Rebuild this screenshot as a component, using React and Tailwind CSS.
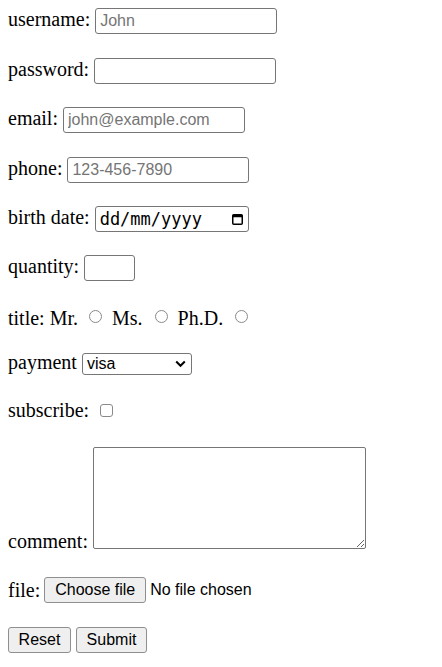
export default function App() {
  const serif = "font-['Liberation_Serif','Times_New_Roman',serif] text-[20px] text-black";
  const sans = "font-['Liberation_Sans',Arial,sans-serif] text-[16px] text-black";
  const field =
    "block shrink-0 h-[26px] border border-[#767676] rounded-[3px] px-[4px] bg-white outline-none placeholder:text-[#757575] font-['Liberation_Sans',Arial,sans-serif] text-[16px] text-black";
  const radio =
    "block shrink-0 w-[13px] h-[13px] rounded-full border border-[#8a8a8a] bg-white mt-[3px]";
  const btn =
    "shrink-0 h-[26px] border border-[#8f8f8f] rounded-[3px] bg-[#efefef] px-[8px] font-['Liberation_Sans',Arial,sans-serif] text-[16px] text-black leading-none";
  const label = "leading-[23px] shrink-0";

  return (
    <form className={`${serif} pl-[8px] pt-[8px] bg-white`}>
      <div className="flex items-start gap-[5px] h-[26px]">
        <span className={label}>username:</span>
        <input className={`${field} w-[182px]`} placeholder="John" />
      </div>
      <div className="flex items-start gap-[5px] h-[26px] mt-[24px]">
        <span className={label}>password:</span>
        <input type="password" className={`${field} w-[182px]`} />
      </div>
      <div className="flex items-start gap-[5px] h-[26px] mt-[23px]">
        <span className={label}>email:</span>
        <input className={`${field} w-[182px]`} placeholder="john@example.com" />
      </div>
      <div className="flex items-start gap-[5px] h-[26px] mt-[24px]">
        <span className={label}>phone:</span>
        <input className={`${field} w-[182px]`} placeholder="123-456-7890" />
      </div>
      <div className="flex items-start gap-[5px] h-[26px] mt-[23px]">
        <span className={label}>birth date:</span>
        <div className="shrink-0 h-[26px] w-[154px] border border-[#767676] rounded-[3px] pl-[4px] pr-[5px] flex items-center justify-between bg-white">
          <span className="font-['DejaVu_Sans_Mono','Liberation_Mono',monospace] text-[17px] text-black leading-none">
            dd/mm/yyyy
          </span>
          <svg width="11" height="12" viewBox="0 0 11 12">
            <rect x="0.75" y="1.75" width="9.5" height="9.5" rx="1" fill="none" stroke="black" strokeWidth="1.5" />
            <rect x="0.75" y="1.75" width="9.5" height="2.5" fill="black" />
          </svg>
        </div>
      </div>
      <div className="flex items-start gap-[5px] h-[26px] mt-[23px]">
        <span className={label}>quantity:</span>
        <input type="text" className={`${field} w-[51px]`} />
      </div>
      <div className="flex items-start h-[26px] mt-[26px]" role="radiogroup">
        <span className={label}>title: Mr.</span>
        <span role="radio" aria-checked="false" className={`${radio} ml-[11px]`} />
        <span className={`${label} ml-[10px]`}>Ms.</span>
        <span role="radio" aria-checked="false" className={`${radio} ml-[12px]`} />
        <span className={`${label} ml-[10px]`}>Ph.D.</span>
        <span role="radio" aria-checked="false" className={`${radio} ml-[12px]`} />
      </div>
      <div className="flex items-start gap-[5px] h-[26px] mt-[18px]">
        <span className={label}>payment</span>
        <div className="relative shrink-0 mt-[2px]">
          <select className="block appearance-none h-[22px] w-[110px] border border-[#767676] rounded-[3px] pl-[4px] bg-white outline-none font-['Liberation_Sans',Arial,sans-serif] text-[16px] text-black leading-none">
            <option>visa</option>
            <option>mastercard</option>
          </select>
          <svg className="absolute right-[6px] top-[7px] pointer-events-none" width="11" height="8" viewBox="0 0 11 8">
            <path d="M1.2 1.5 L5.5 5.8 L9.8 1.5" fill="none" stroke="black" strokeWidth="2" />
          </svg>
        </div>
      </div>
      <div className="flex items-start gap-[5px] h-[26px] mt-[22px]">
        <span className={label}>subscribe:</span>
        <span role="checkbox" aria-checked="false" className="block shrink-0 w-[13px] h-[13px] rounded-[3px] border border-[#8a8a8a] bg-white mt-[5px] ml-[6px]" />
      </div>
      <div className="flex items-end gap-[5px] mt-[22px]">
        <span className="leading-[20px] mb-[-2px] shrink-0">comment:</span>
        <textarea className="block shrink-0 w-[273px] h-[102px] border border-[#767676] rounded-[2px] bg-white outline-none resize" />
      </div>
      <div className="flex items-center gap-[4px] h-[26px] mt-[28px]">
        <span className="shrink-0">file:</span>
        <button type="button" className={`${btn} w-[102px]`}>Choose file</button>
        <span className={sans}>No file chosen</span>
      </div>
      <div className="flex items-center gap-[5px] h-[26px] mt-[24px] pb-[15px] box-content">
        <button type="reset" className={`${btn} w-[63px]`}>Reset</button>
        <button type="button" className={`${btn} w-[71px]`}>Submit</button>
      </div>
    </form>
  );
}
